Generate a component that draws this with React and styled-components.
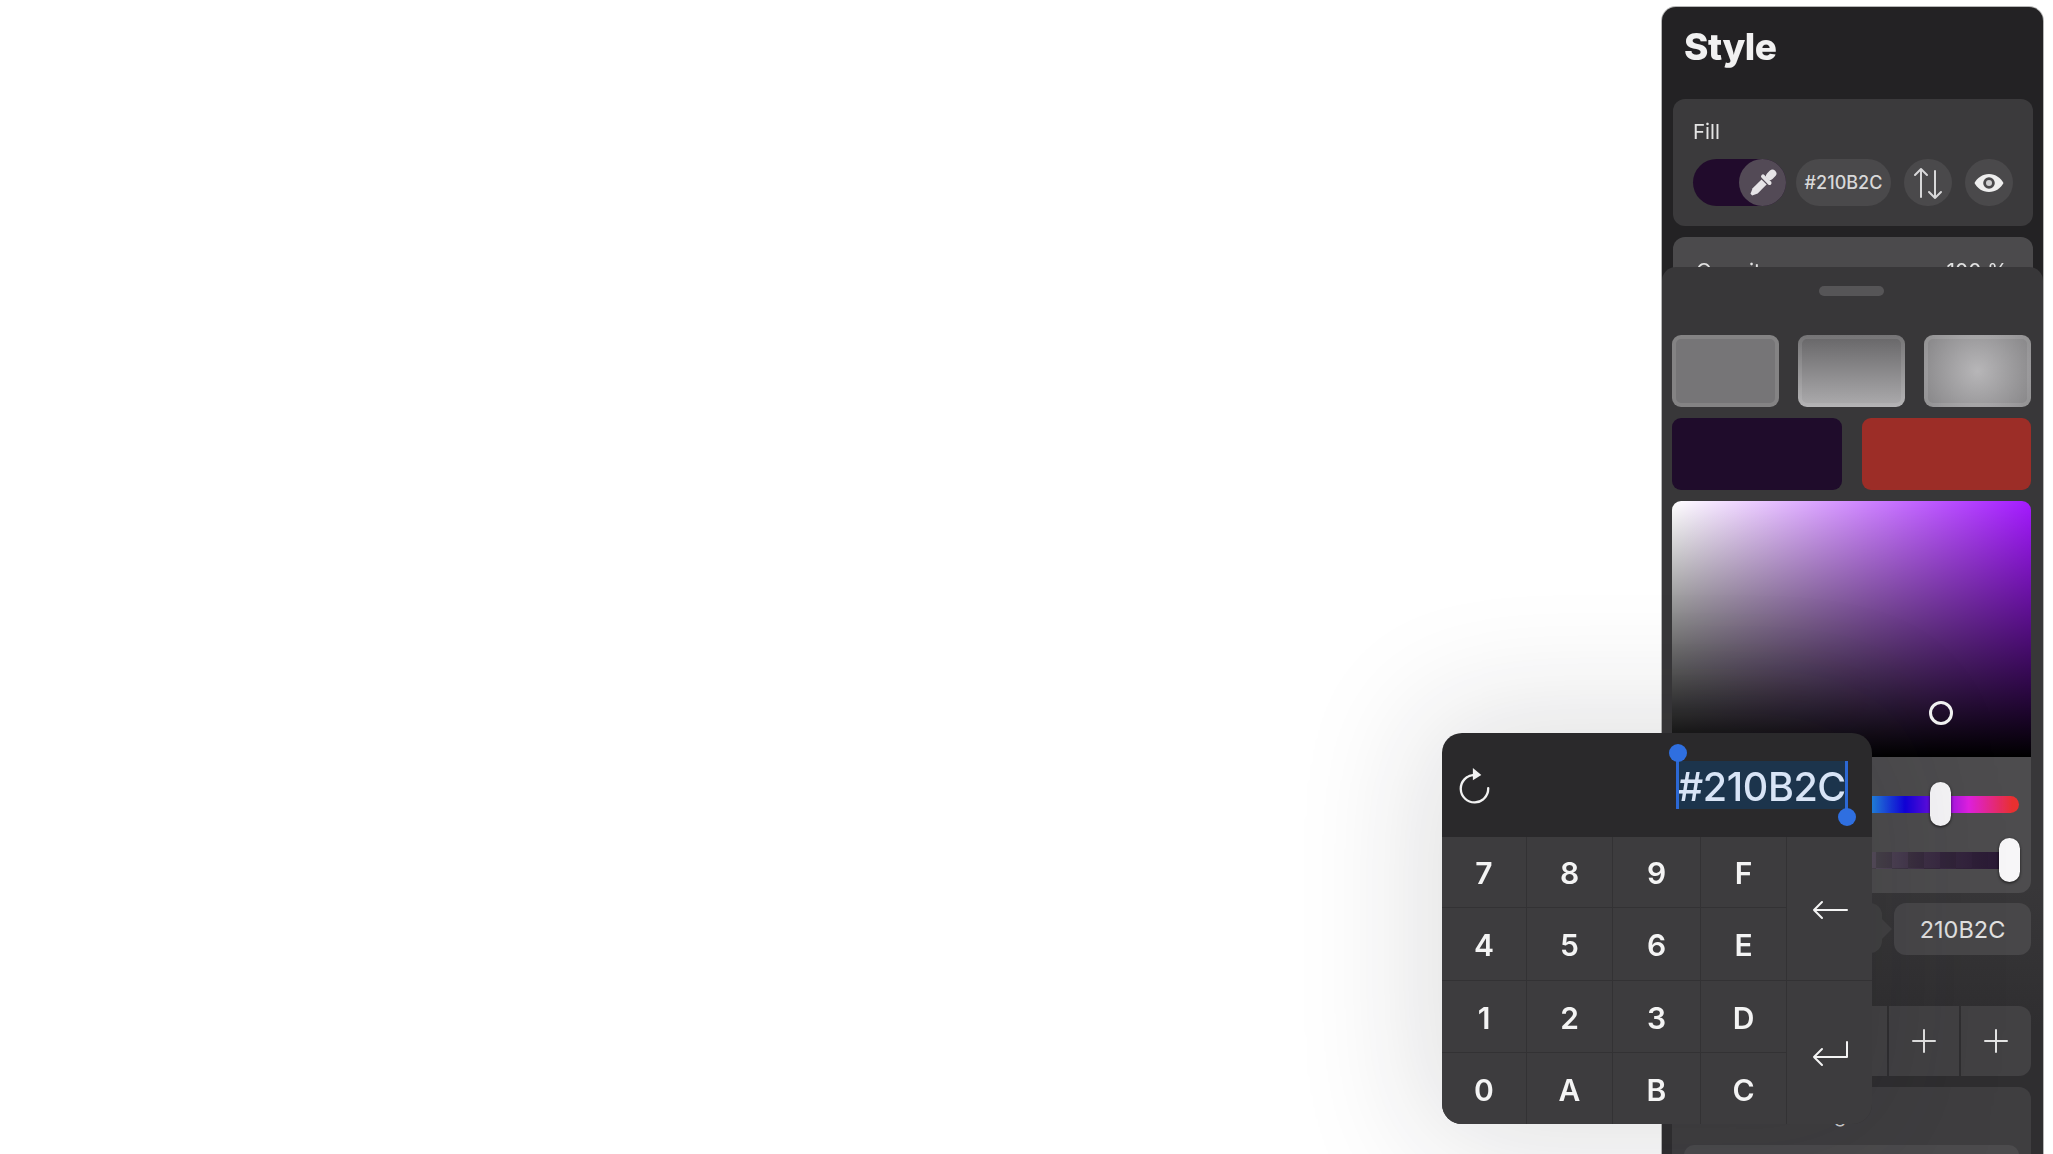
import React from 'react';
import styled, { createGlobalStyle } from 'styled-components';

const GlobalStyle = createGlobalStyle`
    html, body {
        margin: 0;
        background: #fff;
        font-family: Inter, "Liberation Sans", sans-serif;
    }
    * { box-sizing: border-box; }
`;

const Page = styled.div`
    position: relative;
    display: flex;
    justify-content: flex-end;
    height: 1154px;
    padding: 7px 10px 0 0;
    overflow: hidden;
    filter: blur(0.6px);
`;

const Panel = styled.aside`
    position: relative;
    width: 381px;
    height: 1147px;
    border-radius: 14px 14px 0 0;
    background: #232224;
    box-shadow: 0 0 0 1px rgba(110, 110, 110, 0.5);
    overflow: hidden;
`;

const Title = styled.h1`
    margin: 0;
    height: 92px;
    padding: 18px 0 0 22px;
    font-size: 37px;
    line-height: 44px;
    font-weight: 800;
    letter-spacing: -0.5px;
    color: #f1f1f1;
`;

const FillCard = styled.section`
    height: 127px;
    margin: 0 10px 0 11px;
    padding: 20px 20px 0;
    border-radius: 12px;
    background: #3b3a3c;
`;

const FillLabel = styled.div`
    font-size: 20.5px;
    line-height: 26px;
    color: #e4e4e4;
`;

const FillRow = styled.div`
    display: flex;
    align-items: center;
    margin-top: 14px;
`;

const ColorToggle = styled.div`
    display: flex;
    justify-content: flex-end;
    width: 94px;
    height: 47px;
    border-radius: 24px;
    background: #210b2c;
`;

const RoundButton = styled.div`
    display: flex;
    align-items: center;
    justify-content: center;
    flex: none;
    width: ${props => props.$width || 48}px;
    height: 47px;
    margin-left: ${props => props.$gap || 0}px;
    border-radius: 24px;
    background: ${props => props.$bg || '#4a494b'};
    color: #d8d8d9;
    font-size: 18px;
    font-weight: 500;
`;

const OpacityCard = styled.section`
    display: flex;
    justify-content: space-between;
    height: 90px;
    margin: 11px 10px 0 11px;
    padding: 22px 25px 0 23px;
    border-radius: 12px;
    background: #4b4a4c;
    font-size: 21px;
    line-height: 26px;
    color: #e2e2e2;
`;

const Sheet = styled.section`
    position: absolute;
    top: 260px;
    left: 0;
    right: 0;
    bottom: 0;
    padding: 19px 12px 0 10px;
    border-radius: 14px 14px 0 0;
    background: linear-gradient(#383739 0, #383739 620px, #2f2e30 760px, #2f2e30 100%);
`;

const Handle = styled.div`
    width: 65px;
    height: 10px;
    margin: 0 auto 39px;
    border-radius: 5px;
    background: #565557;
`;

const SwatchRow = styled.div`
    display: grid;
    grid-template-columns: repeat(3, 107px);
    justify-content: space-between;
    margin-bottom: 11px;
`;

const Swatch = styled.div`
    height: 72px;
    border-radius: 9px;
    border: 4px solid rgba(255, 255, 255, 0.1);
    background: ${props => props.$bg};
    background-origin: border-box;
`;

const ColorRow = styled.div`
    display: grid;
    grid-template-columns: 1fr 1fr;
    gap: 20px;
    margin-bottom: 11px;
`;

const ColorBlock = styled.div`
    height: 72px;
    border-radius: 9px;
    background: ${props => props.$bg};
`;

const SatValue = styled.div`
    position: relative;
    height: 256px;
    border-radius: 9px 9px 0 0;
    background:
        linear-gradient(to top, #000, transparent),
        linear-gradient(to right, #fff, #a41aff);
`;

const Cursor = styled.div`
    position: absolute;
    left: 257px;
    top: 200px;
    width: 24px;
    height: 24px;
    border: 3px solid #f4f4f4;
    border-radius: 50%;
`;

const SliderCard = styled.div`
    display: flex;
    flex-direction: column;
    gap: 12px;
    height: 136px;
    padding: 25px 12px 0;
    border-radius: 0 0 12px 12px;
    background: #4d4c4e;
`;

const SliderRow = styled.div`
    position: relative;
    display: flex;
    align-items: center;
    height: 44px;
`;

const HueTrack = styled.div`
    width: 100%;
    height: 17px;
    border-radius: 9px;
    background: linear-gradient(to right, #e83030, #e8e030 17%, #30e040 33%, #2ad4e8 50%, #1000e0 66%, #e020e0 85%, #e83030 98%);
`;

const AlphaTrack = styled.div`
    width: 100%;
    height: 17px;
    background:
        linear-gradient(to right, rgba(33, 11, 44, 0) 50%, rgba(33, 11, 44, 0.55) 72%, #2a1a35 94%),
        repeating-conic-gradient(#5e5863 0 25%, #4e4c50 0 50%) 0 0 / 32px 32px;
`;

const Thumb = styled.div`
    position: absolute;
    top: 0;
    left: ${props => props.$left}px;
    width: 21px;
    height: 44px;
    border-radius: 11px;
    background: #f7f6f8;
    box-shadow: 0 1px 3px rgba(0, 0, 0, 0.7);
`;

const HexRow = styled.div`
    display: flex;
    justify-content: space-between;
    margin-top: 10px;
`;

const RgbField = styled.div`
    position: relative;
    width: 210px;
    height: 50px;
    border-radius: 12px;
    background: #414042;
    &::after {
        content: '';
        position: absolute;
        right: -10px;
        top: 15px;
        border-left: 11px solid #414042;
        border-top: 11px solid transparent;
        border-bottom: 11px solid transparent;
    }
`;

const HexField = styled.div`
    display: flex;
    align-items: center;
    justify-content: center;
    width: 137px;
    height: 52px;
    border-radius: 12px;
    background: #484749;
    color: #e2e2e2;
    font-size: 23.5px;
`;

const PresetRow = styled.div`
    display: grid;
    grid-template-columns: repeat(5, 1fr);
    gap: 2px;
    height: 70px;
    margin-top: 51px;
    border-radius: 12px;
    overflow: hidden;
`;

const PresetCell = styled.div`
    display: flex;
    align-items: center;
    justify-content: center;
    background: #424143;
    color: #e4e4e4;
`;

const BottomCard = styled.div`
    height: 90px;
    margin-top: 11px;
    padding: 15px 12px 0;
    border-radius: 12px 12px 0 0;
    background: #3f3e40;
`;

const BottomLabel = styled.div`
    padding-left: 16px;
    font-size: 20px;
    line-height: 26px;
    color: #cfcfcf;
`;

const BottomInner = styled.div`
    height: 40px;
    margin-top: 17px;
    border-radius: 10px 10px 0 0;
    background: #4c4b4d;
`;

const Keypad = styled.div`
    position: absolute;
    left: 1442px;
    top: 733px;
    width: 430px;
    height: 391px;
    border-radius: 20px;
    overflow: hidden;
`;

const KeypadShadow = styled.div`
    position: absolute;
    left: 1442px;
    top: 733px;
    width: 430px;
    height: 391px;
    border-radius: 20px;
    box-shadow: 0 0 130px 20px rgba(30, 25, 35, 0.14);
`;

const KeypadHeader = styled.div`
    display: flex;
    align-items: center;
    justify-content: space-between;
    height: 104px;
    padding: 0 25px 0 16px;
    background: #2a292b;
`;

const HexSelection = styled.div`
    position: relative;
    display: flex;
    align-items: center;
    justify-content: center;
    width: 170px;
    height: 48px;
    padding-top: 3px;
    background: #1c344c;
    color: #d8e4f6;
    font-size: 39.5px;
    font-weight: 500;
    letter-spacing: -0.4px;
    white-space: nowrap;
`;

const Caret = styled.span`
    position: absolute;
    top: 0;
    bottom: 0;
    ${props => (props.$end ? 'right: -1px;' : 'left: -1px;')}
    width: 3px;
    background: #2c68d4;
    &::after {
        content: '';
        position: absolute;
        left: -7.5px;
        ${props => (props.$end ? 'bottom: -17px;' : 'top: -17px;')}
        width: 18px;
        height: 18px;
        border-radius: 50%;
        background: #2f6fe0;
    }
`;

const KeyGrid = styled.div`
    display: grid;
    grid-template-columns: 84px 85px 87px 85px 85px;
    grid-template-rows: 70px 72px 71px 71px;
    background: #333234;
    gap: 1px;
    height: 287px;
`;

const Key = styled.div`
    display: flex;
    align-items: center;
    justify-content: center;
    padding-top: 2px;
    background: #3d3c3e;
    color: #f4f4f4;
    font-size: 30px;
    font-weight: 600;
    ${props => props.$tall && 'grid-row: span 2;'}
`;

const Icon = styled.svg`
    display: block;
    flex: none;
    fill: none;
    stroke: currentColor;
    stroke-linecap: round;
    stroke-linejoin: round;
`;

const Pipette = () => (
    <Icon width="36" height="36" viewBox="0 0 24 24" style={{ stroke: 'none' }}>
        <g transform="rotate(45 12 12)" fill="#e6e4e7">
            <rect x="9.4" y="0.5" width="5.2" height="7.5" rx="2.6" />
            <rect x="7.6" y="7.6" width="8.8" height="2.6" rx="1.3" />
            <path d="M9.6 11h4.8v8.4L12.8 23h-1.6L9.6 19.4z" />
        </g>
    </Icon>
);

const SwapArrows = () => (
    <Icon width="30" height="34" viewBox="0 0 30 34" strokeWidth="2">
        <path d="M8 31V3M2 9l6-6 6 6" />
        <path d="M22 5v27M16 26l6 6 6-6" />
    </Icon>
);

const Eye = () => (
    <Icon width="30" height="18" viewBox="0 0 30 18" style={{ stroke: 'none' }}>
        <path
            fill="#eeeeee"
            fillRule="evenodd"
            d="M15 0C8.5 0 3 4 0.5 9 3 14 8.5 18 15 18s12-4 14.5-9C27 4 21.500 0 15 0zM15 3.200a5.800 5.800 0 1 1 0 11.600 5.800 5.800 0 0 1 0-11.600z"
        />
        <circle cx="15" cy="9" r="3" fill="#cfcfd0" />
    </Icon>
);

const Reset = () => (
    <Icon width="34" height="38" viewBox="0 0 32 36" strokeWidth="2.2" style={{ color: '#f2f2f2' }}>
        <path d="M15 8.500A13 13 0 1 0 28.500 21" />
        <path d="M14 2l8 6.500-8 5z" fill="currentColor" stroke="none" />
    </Icon>
);

const Backspace = () => (
    <Icon width="36" height="20" viewBox="0 0 36 20" strokeWidth="2">
        <path d="M35 10H2M10 2l-8 8 8 8" />
    </Icon>
);

const Enter = () => (
    <Icon width="36" height="26" viewBox="0 0 36 26" strokeWidth="2">
        <path d="M35 1v15H2M10 8l-8 8 8 8" />
    </Icon>
);

const Plus = () => (
    <Icon width="24" height="24" viewBox="0 0 24 24" strokeWidth="2">
        <path d="M12 1v22M1 12h22" />
    </Icon>
);

const keyRows = ['789F', '456E', '123D', '0ABC'];

const App = () => (
    <Page>
        <GlobalStyle />
        <Panel>
            <Title>Style</Title>
            <FillCard>
                <FillLabel>Fill</FillLabel>
                <FillRow>
                    <ColorToggle>
                        <RoundButton $width={47} $bg="#534a56">
                            <Pipette />
                        </RoundButton>
                    </ColorToggle>
                    <RoundButton $width={95} $gap={10}>#210B2C</RoundButton>
                    <RoundButton $gap={13}><SwapArrows /></RoundButton>
                    <RoundButton $gap={13}><Eye /></RoundButton>
                </FillRow>
            </FillCard>
            <OpacityCard>
                <span>Opacity</span>
                <span>100 %</span>
            </OpacityCard>
            <Sheet>
                <Handle />
                <SwatchRow>
                    <Swatch $bg="#767577" />
                    <Swatch $bg="linear-gradient(#666567, #adacae)" />
                    <Swatch $bg="radial-gradient(circle at 50% 50%, #b7b6b8 0, #858486 100%)" />
                </SwatchRow>
                <ColorRow>
                    <ColorBlock $bg="#1f0c2b" />
                    <ColorBlock $bg="#9c2d27" />
                </ColorRow>
                <SatValue>
                    <Cursor />
                </SatValue>
                <SliderCard>
                    <SliderRow>
                        <HueTrack />
                        <Thumb $left={246} />
                    </SliderRow>
                    <SliderRow>
                        <AlphaTrack />
                        <Thumb $left={315} />
                    </SliderRow>
                </SliderCard>
                <HexRow>
                    <RgbField />
                    <HexField>210B2C</HexField>
                </HexRow>
                <PresetRow>
                    {[0, 1, 2, 3, 4].map(i => (
                        <PresetCell key={i}><Plus /></PresetCell>
                    ))}
                </PresetRow>
                <BottomCard>
                    <BottomLabel>Texture Scaling</BottomLabel>
                    <BottomInner />
                </BottomCard>
            </Sheet>
        </Panel>
        <KeypadShadow />
        <Keypad>
            <KeypadHeader>
                <Reset />
                <HexSelection>
                    #210B2C
                    <Caret />
                    <Caret $end />
                </HexSelection>
            </KeypadHeader>
            <KeyGrid>
                {keyRows.map((row, r) => (
                    <React.Fragment key={row}>
                        {row.split('').map(k => <Key key={k}>{k}</Key>)}
                        {r === 0 && <Key $tall><Backspace /></Key>}
                        {r === 2 && <Key $tall><Enter /></Key>}
                    </React.Fragment>
                ))}
            </KeyGrid>
        </Keypad>
    </Page>
);

export default App;
